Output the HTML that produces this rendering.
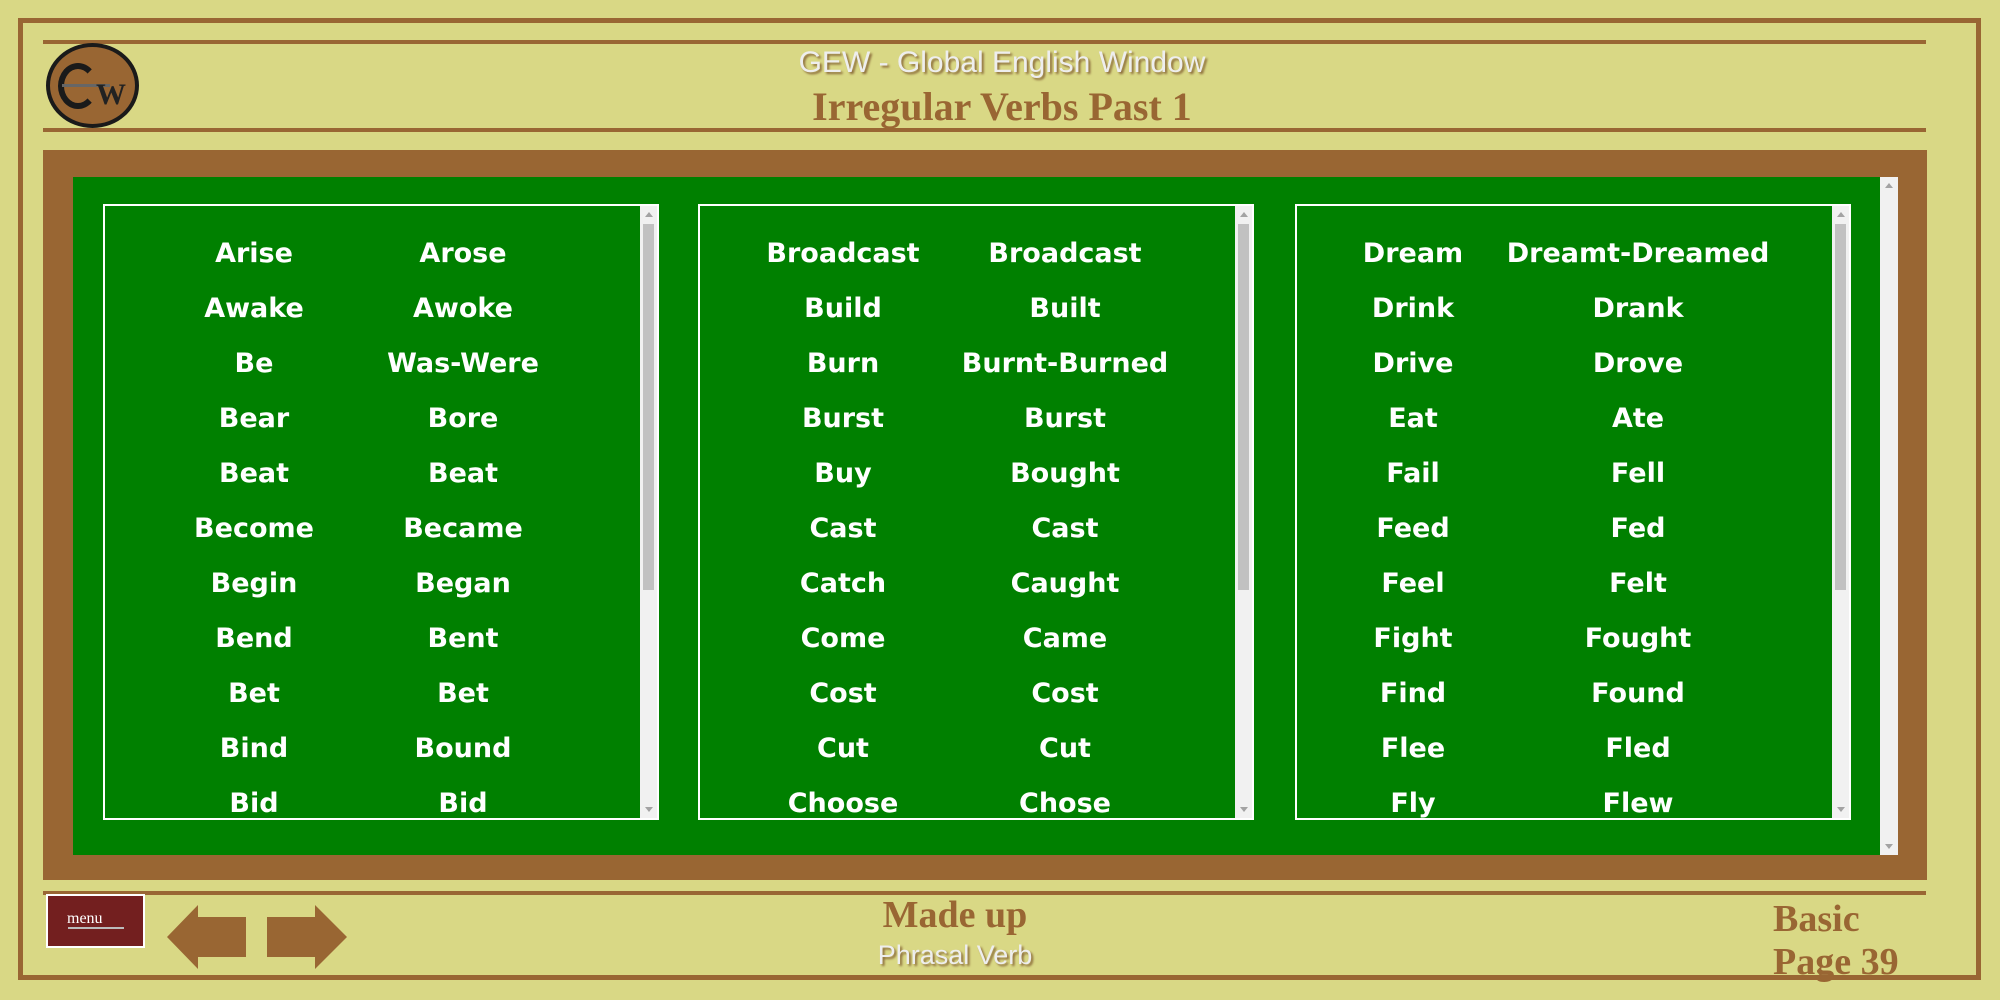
<!DOCTYPE html>
<html><head><meta charset="utf-8"><style>
*{margin:0;padding:0;box-sizing:border-box}
body{width:2000px;height:1000px;background:#d9d885;position:relative;overflow:hidden;font-family:"Liberation Sans",sans-serif}
.a{position:absolute}
.line{position:absolute;background:#996633;height:4px}
.t1{position:absolute;left:0;width:2000px;top:46px;text-align:center;padding-left:4px;font-size:30px;color:#eee;text-shadow:2px 2px 2px #8a6a3a}
.t2{position:absolute;left:0;width:2000px;top:83px;text-align:center;padding-left:4px;font:bold 40px "Liberation Serif",serif;color:#996633}
.box{position:absolute;top:204px;width:556px;height:616px;border:2px solid #fff;background:#008000;overflow:hidden}
.sb{position:absolute;right:0;top:0;width:17px;height:100%;background:#f1f1f1}
.th{position:absolute;left:3px;width:11px;top:18px;height:366px;background:#c1c1c1}
.up{position:absolute;left:5px;top:6px;border-left:4px solid transparent;border-right:4px solid transparent;border-bottom:5px solid #a3a3a3}
.dn{position:absolute;left:5px;bottom:6px;border-left:4px solid transparent;border-right:4px solid transparent;border-top:5px solid #a3a3a3}
.w{position:absolute;color:#fff;font:bold 27px "DejaVu Sans",sans-serif;transform:translateX(-50%);white-space:nowrap;line-height:32px}
.bs{font:bold 38px "Liberation Serif",serif;color:#996633;position:absolute}
</style></head><body>
<div class="a" style="left:18px;top:18px;width:1963px;height:962px;border:5px solid #996633"></div>
<div class="line" style="left:43px;top:40px;width:1883px"></div>
<div class="line" style="left:43px;top:128px;width:1883px"></div>
<div class="a" style="left:46px;top:43px;width:93px;height:85px;border-radius:50%;background:#996633;border:4px solid #1a1a1a"></div>
<div class="a" style="left:58px;top:63px;width:40px;height:46px;border-radius:50%;border:6px solid #1a1a1a;border-right-color:transparent"></div>
<div class="a" style="left:62px;top:84px;width:48px;height:3px;background:#666"></div>
<div class="a" style="left:96px;top:78px;font:bold 30px 'Liberation Serif',serif;color:#222">W</div>
<div class="t1">GEW - Global English Window</div>
<div class="t2">Irregular Verbs Past 1</div>
<div class="a" style="left:43px;top:150px;width:1884px;height:730px;background:#996633"></div>
<div class="a" style="left:73px;top:177px;width:1807px;height:678px;background:#008000"></div>
<div class="a" style="left:1880px;top:177px;width:18px;height:678px;background:#f1f1f1"><div class="up"></div><div class="dn"></div></div>
<div id="boxes"></div>
<div class="line" style="left:43px;top:891px;width:1883px"></div>
<div class="a" style="left:46px;top:894px;width:99px;height:54px;background:#731f1f;border:2px solid #fff"></div>
<div class="a" style="left:67px;top:910px;font:16px 'Liberation Serif',serif;color:#fff">menu</div>
<div class="a" style="left:68px;top:927px;width:56px;height:2px;background:#bbb"></div>
<svg class="a" style="left:0;top:0" width="400" height="1000"><polygon fill="#996633" points="167,937 198,905 198,917 246,917 246,957 198,957 198,969"/><polygon fill="#996633" points="347,937 315,905 315,917 267,917 267,957 315,957 315,969"/></svg>
<div class="bs" style="left:0;width:1910px;text-align:center;top:893px">Made up</div>
<div class="a" style="left:0;width:1910px;text-align:center;top:940px;font-size:27px;color:#eee;text-shadow:2px 2px 2px #8a6a3a">Phrasal Verb</div>
<div class="bs" style="left:1773px;top:897px">Basic</div>
<div class="bs" style="left:1773px;top:940px">Page 39</div>
<script>
var data=[[103,151,360,[["Arise","Arose"],["Awake","Awoke"],["Be","Was-Were"],["Bear","Bore"],["Beat","Beat"],["Become","Became"],["Begin","Began"],["Bend","Bent"],["Bet","Bet"],["Bind","Bound"],["Bid","Bid"]]],
[698,145,367,[["Broadcast","Broadcast"],["Build","Built"],["Burn","Burnt-Burned"],["Burst","Burst"],["Buy","Bought"],["Cast","Cast"],["Catch","Caught"],["Come","Came"],["Cost","Cost"],["Cut","Cut"],["Choose","Chose"]]],
[1295,118,343,[["Dream","Dreamt-Dreamed"],["Drink","Drank"],["Drive","Drove"],["Eat","Ate"],["Fail","Fell"],["Feed","Fed"],["Feel","Felt"],["Fight","Fought"],["Find","Found"],["Flee","Fled"],["Fly","Flew"]]]];
var h="";data.forEach(function(b){h+='<div class="box" style="left:'+b[0]+'px"><div class="sb"><div class="up"></div><div class="th"></div><div class="dn"></div></div>';
b[3].forEach(function(r,i){var y=48+i*55-16;h+='<div class="w" style="left:'+(b[1]-2)+'px;top:'+y+'px">'+r[0]+'</div><div class="w" style="left:'+(b[2]-2)+'px;top:'+y+'px">'+r[1]+'</div>';});h+='</div>';});
document.getElementById("boxes").innerHTML=h;
</script>
</body></html>
